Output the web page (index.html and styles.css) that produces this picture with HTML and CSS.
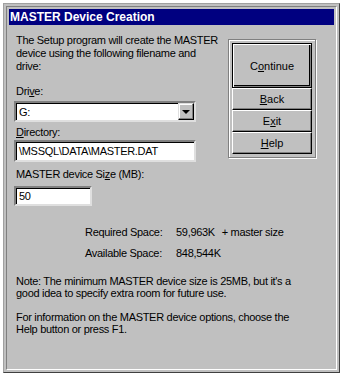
FILE: index.html
```html
<!DOCTYPE html>
<html lang="en">
<head>
    <meta charset="UTF-8">
    <meta name="viewport" content="width=device-width, initial-scale=1.0">
    <title>MASTER Device Creation</title>
    <link rel="stylesheet" href="styles.css">
</head>
<body>
    <div class="window">
        <div class="frame">
            <div class="titlebar">MASTER Device Creation</div>

            <div class="main">
                <!-- 左侧：文件名和驱动器 -->
                <div class="fields">
                    <p class="intro">The Setup program will create the MASTER device using the following filename and drive:</p>

                    <label class="field-label label-drive">Dri<u>v</u>e:</label>
                    <div class="combo">
                        <span class="combo-value">G:</span>
                        <span class="combo-btn"><span class="arrow"></span></span>
                    </div>

                    <label class="field-label label-dir"><u>D</u>irectory:</label>
                    <div class="textbox textbox-dir">\MSSQL\DATA\MASTER.DAT</div>

                    <label class="field-label label-size">MASTER device Si<u>z</u>e (MB):</label>
                    <div class="textbox textbox-size">50</div>
                </div>

                <!-- 右侧：按钮组 -->
                <div class="button-box">
                    <button class="btn btn-default">C<u>o</u>ntinue</button>
                    <button class="btn"><u>B</u>ack</button>
                    <button class="btn">E<u>x</u>it</button>
                    <button class="btn"><u>H</u>elp</button>
                </div>
            </div>

            <div class="space">
                <span>Required Space:</span>
                <span>59,963K <span class="extra">+ master size</span></span>
                <span>Available Space:</span>
                <span>848,544K</span>
            </div>

            <p class="note">Note: The minimum MASTER device size is 25MB, but it's a good idea to specify extra room for future use.</p>

            <p class="note note-help">For information on the MASTER device options, choose the Help button or press F1.</p>
        </div>
    </div>
</body>
</html>
```

FILE: styles.css
```css
/* 通用样式 */
body {
    margin: 0;
    background: #fff;
    font-family: "Liberation Sans", Arial, sans-serif;
    font-size: 11px;
    letter-spacing: -0.3px;
    color: #000;
}
.window {
    box-sizing: border-box;
    width: 337px;
    height: 370px;
    margin: 3px 0 0 3px;
    padding: 2px;
    background: #c0c0c0;
    border: 1px solid;
    border-color: #a0a0a0 #404040 #404040 #a0a0a0;
}
.frame {
    box-sizing: border-box;
    height: 100%;
    padding: 2px;
    border: 1px solid;
    border-color: #808080 #fff #fff #808080;
}
.titlebar {
    height: 16px;
    line-height: 16px;
    padding-left: 1px;
    background: #000080;
    color: #fff;
    font-weight: bold;
    font-size: 12px;
    letter-spacing: 0;
}

/* 主体区域 */
.main {
    display: flex;
    padding-left: 5px;
}
.fields {
    width: 212px;
}
.intro {
    width: 206px;
    margin: 9px 0 0 2px;
    line-height: 13px;
}
.field-label {
    display: block;
    padding-left: 2px;
    line-height: 13px;
}
.label-drive { margin-top: 12px; }
.label-dir { margin-top: 4px; }
.label-size { margin-top: 6px; }

.combo,
.textbox {
    box-sizing: border-box;
    background: #fff;
    border: 2px solid;
    border-color: #808080 #dfdfdf #dfdfdf #808080;
    box-shadow: inset 1px 1px 0 #000;
}
.combo {
    display: flex;
    align-items: center;
    justify-content: space-between;
    width: 182px;
    height: 21px;
    margin-top: 3px;
    padding: 0 0 0 3px;
}
.combo-btn {
    box-sizing: border-box;
    display: flex;
    align-items: center;
    justify-content: center;
    width: 16px;
    height: 17px;
    background: #c0c0c0;
    border: 1px solid;
    border-color: #dfdfdf #000 #000 #dfdfdf;
    box-shadow: inset -1px -1px 0 #808080, inset 1px 1px 0 #fff;
}
.arrow {
    width: 0;
    height: 0;
    border-left: 4px solid transparent;
    border-right: 4px solid transparent;
    border-top: 4px solid #000;
}
.textbox {
    line-height: 18px;
    padding-left: 3px;
}
.textbox-dir {
    width: 182px;
    height: 22px;
    margin-top: 1px;
}
.textbox-size {
    width: 78px;
    height: 20px;
    margin-top: 5px;
    line-height: 16px;
}

/* 按钮组 */
.button-box {
    display: flex;
    flex-direction: column;
    width: 80px;
    margin: 14px 0 0 2px;
    padding: 3px;
    border: 1px solid #808080;
    box-shadow: 1px 1px 0 #fff, inset 1px 1px 0 #fff;
    align-self: flex-start;
}
.btn {
    box-sizing: border-box;
    width: 80px;
    height: 22px;
    margin: 0;
    padding: 0;
    font-family: inherit;
    font-size: 11px;
    letter-spacing: 0;
    color: #000;
    background: #c0c0c0;
    border: 1px solid;
    border-color: #fff #000 #000 #fff;
    box-shadow: inset -1px -1px 0 #808080;
}
.btn-default {
    height: 45px;
    border: 1px solid #000;
    box-shadow: inset 1px 1px 0 #fff, inset -1px -1px 0 #808080, inset -2px -2px 0 #000;
}

/* 空间信息 */
.space {
    display: grid;
    grid-template-columns: 91px auto;
    row-gap: 8px;
    margin: 20px 0 0 76px;
    line-height: 13px;
}
.extra {
    margin-left: 4px;
}
.note {
    max-width: 290px;
    margin: 15px 0 0 7px;
    line-height: 12px;
}
.note-help {
    margin-top: 12px;
}
```
